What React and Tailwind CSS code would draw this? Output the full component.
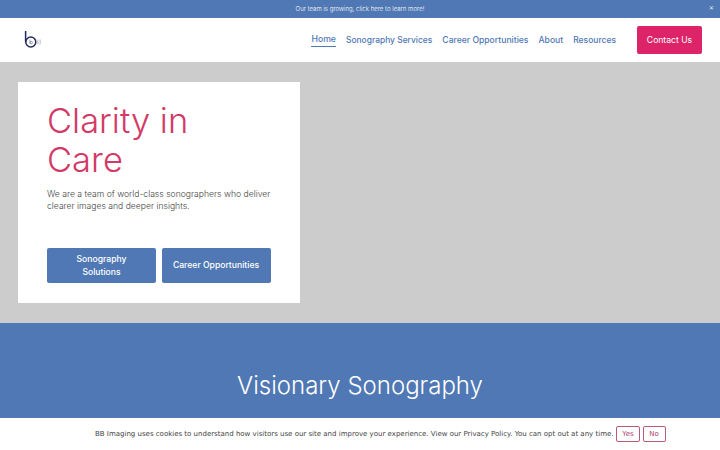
import React from 'react'

const navLinks = [
  { label: 'Sonography Services', size: 'text-[8.45px]' },
  { label: 'Career Opportunities', size: 'text-[8.6px]' },
  { label: 'About', size: 'text-[8.6px]' },
  { label: 'Resources', size: 'text-[8.5px]' },
]
const poppins = "font-['Inter','Liberation_Sans',sans-serif]"

const Logo = () => (
  <svg width="18" height="20" viewBox="0 0 18 20" fill="none">
    <path d="M1.6 1v11" stroke="#232a5c" strokeWidth="1.5" />
    <circle cx="6.8" cy="12" r="5" stroke="#232a5c" strokeWidth="1.5" />
    <path d="M6 9.5v4.2" stroke="#6b7390" strokeWidth="0.7" />
    <circle cx="7.2" cy="12.6" r="1.2" stroke="#6b7390" strokeWidth="0.7" />
    <path d="M13.6 9.5v5M15 9.5v5M16.4 9.5v5" stroke="#c5ccd8" strokeWidth="0.9" />
  </svg>
)

const App = () => {
  return (
    <main className={`relative h-[450px] w-[720px] overflow-hidden bg-white ${poppins}`}>
      <div className="relative flex h-[18px] items-center justify-center bg-[#4f78b4] text-[6.1px] font-light text-white">
        <p>Our team is growing, click here to learn more!</p>
        <span className="absolute right-[6px] top-[3px] text-[8px] leading-none">×</span>
      </div>

      <header className="flex h-[44px] items-center justify-between pl-[24px] pr-[18px]">
        <Logo />
        <nav className="flex items-center gap-[10px]">
          <a className="border-b border-[#4f78b4] text-[8.7px] font-medium leading-[13px] text-[#4f78b4]">Home</a>
          {navLinks.map((link) => (
            <a key={link.label} className={`${link.size} font-medium text-[#4f78b4]`}>{link.label}</a>
          ))}
          <a className="ml-[11px] flex h-[28px] w-[65px] items-center justify-center rounded-[2px] bg-[#dd2469] text-[8.6px] font-normal text-white">Contact Us</a>
        </nav>
      </header>

      <section className="h-[261px] bg-[#cccccc] pl-[18px] pt-[20px]">
        <div className="h-[221px] w-[282px] bg-white pl-[29px] pr-[28px] pt-[19px]">
          <h1 className="text-[34.5px] font-light leading-[39px] text-[#d23a67]">Clarity in<br />Care</h1>
          <p className="mt-[9px] text-[8.6px] font-light leading-[12px] text-[#444444]">We are a team of world-class sonographers who deliver clearer images and deeper insights.</p>
          <div className="mt-[36px] flex gap-[5.5px]">
            <a className="flex h-[35px] w-[109px] items-center justify-center rounded-[2px] bg-[#4f78b4] px-[16px] text-center text-[8.6px] font-medium leading-[12.5px] text-white">Sonography Solutions</a>
            <a className="flex h-[35px] w-[109px] items-center justify-center rounded-[2px] bg-[#4f78b4] text-center text-[8.6px] font-medium text-white">Career Opportunities</a>
          </div>
        </div>
      </section>

      <section className="flex h-[127px] justify-center bg-[#4f78b4] pt-[46px]">
        <h2 className="text-[24px] font-light leading-[34px] text-white">Visionary Sonography</h2>
      </section>

      <div className="absolute bottom-0 left-0 flex h-[32px] w-full items-center gap-[2.5px] bg-white pl-[95px] font-['DejaVu_Sans',sans-serif] text-[7px] text-[#444444]">
        <p>BB Imaging uses cookies to understand how visitors use our site and improve your experience. View our Privacy Policy. You can opt out at any time.</p>
        <button className="h-[16px] w-[24px] rounded-[2px] border border-[#b85a7e] text-[7px] text-[#b0406c]">Yes</button>
        <button className="h-[16px] w-[23px] rounded-[2px] border border-[#b85a7e] text-[7px] text-[#b0406c]">No</button>
      </div>
    </main>
  )
}

export default App
